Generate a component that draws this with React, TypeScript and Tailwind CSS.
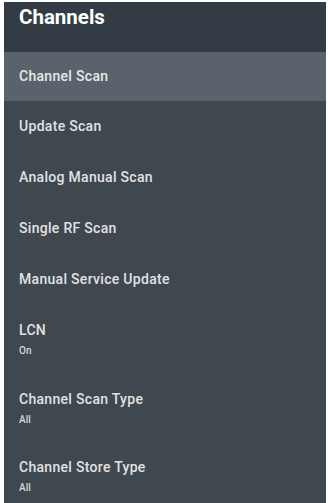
const items: { label: string; value?: string }[] = [
  { label: 'Update Scan' },
  { label: 'Analog Manual Scan' },
  { label: 'Single RF Scan' },
  { label: 'Manual Service Update' },
];

const settings: { label: string; value: string; h: string }[] = [
  { label: 'LCN', value: 'On', h: 'h-[69px]' },
  { label: 'Channel Scan Type', value: 'All', h: 'h-[68px]' },
  { label: 'Channel Store Type', value: 'All', h: 'h-[60px]' },
];

export default function App() {
  return (
    <div className="w-[328px] h-[503px] bg-white pt-[2px] pl-[4px] pr-[2px] font-['Roboto',sans-serif]">
      <div className="h-full bg-[#3f474f] flex flex-col">
        {/* Header */}
        <div className="h-[50px] bg-[#333c45] px-[15px] pt-[3px]">
          <h1 className="text-[20.5px] leading-[24px] font-bold text-white">Channels</h1>
        </div>

        {/* Selected row */}
        <div className="h-[49px] bg-[#5a636b] px-[15px] flex items-center">
          <span className="text-[14px] tracking-[0.3px] font-medium text-[#e8e8e8]">Channel Scan</span>
        </div>

        {items.map((item) => (
          <div key={item.label} className="h-[51px] px-[15px] flex items-center">
            <span className="text-[14px] tracking-[0.3px] font-medium text-[#e2e2e2]">{item.label}</span>
          </div>
        ))}

        {settings.map((s) => (
          <div key={s.label} className={`${s.h} px-[15px] pt-[17px]`}>
            <div className="text-[14px] leading-[16px] tracking-[0.3px] font-medium text-[#e2e2e2]">{s.label}</div>
            <div className="mt-[6px] text-[10px] leading-[13px] font-medium text-[#d8d8d8]">{s.value}</div>
          </div>
        ))}
      </div>
    </div>
  );
}
